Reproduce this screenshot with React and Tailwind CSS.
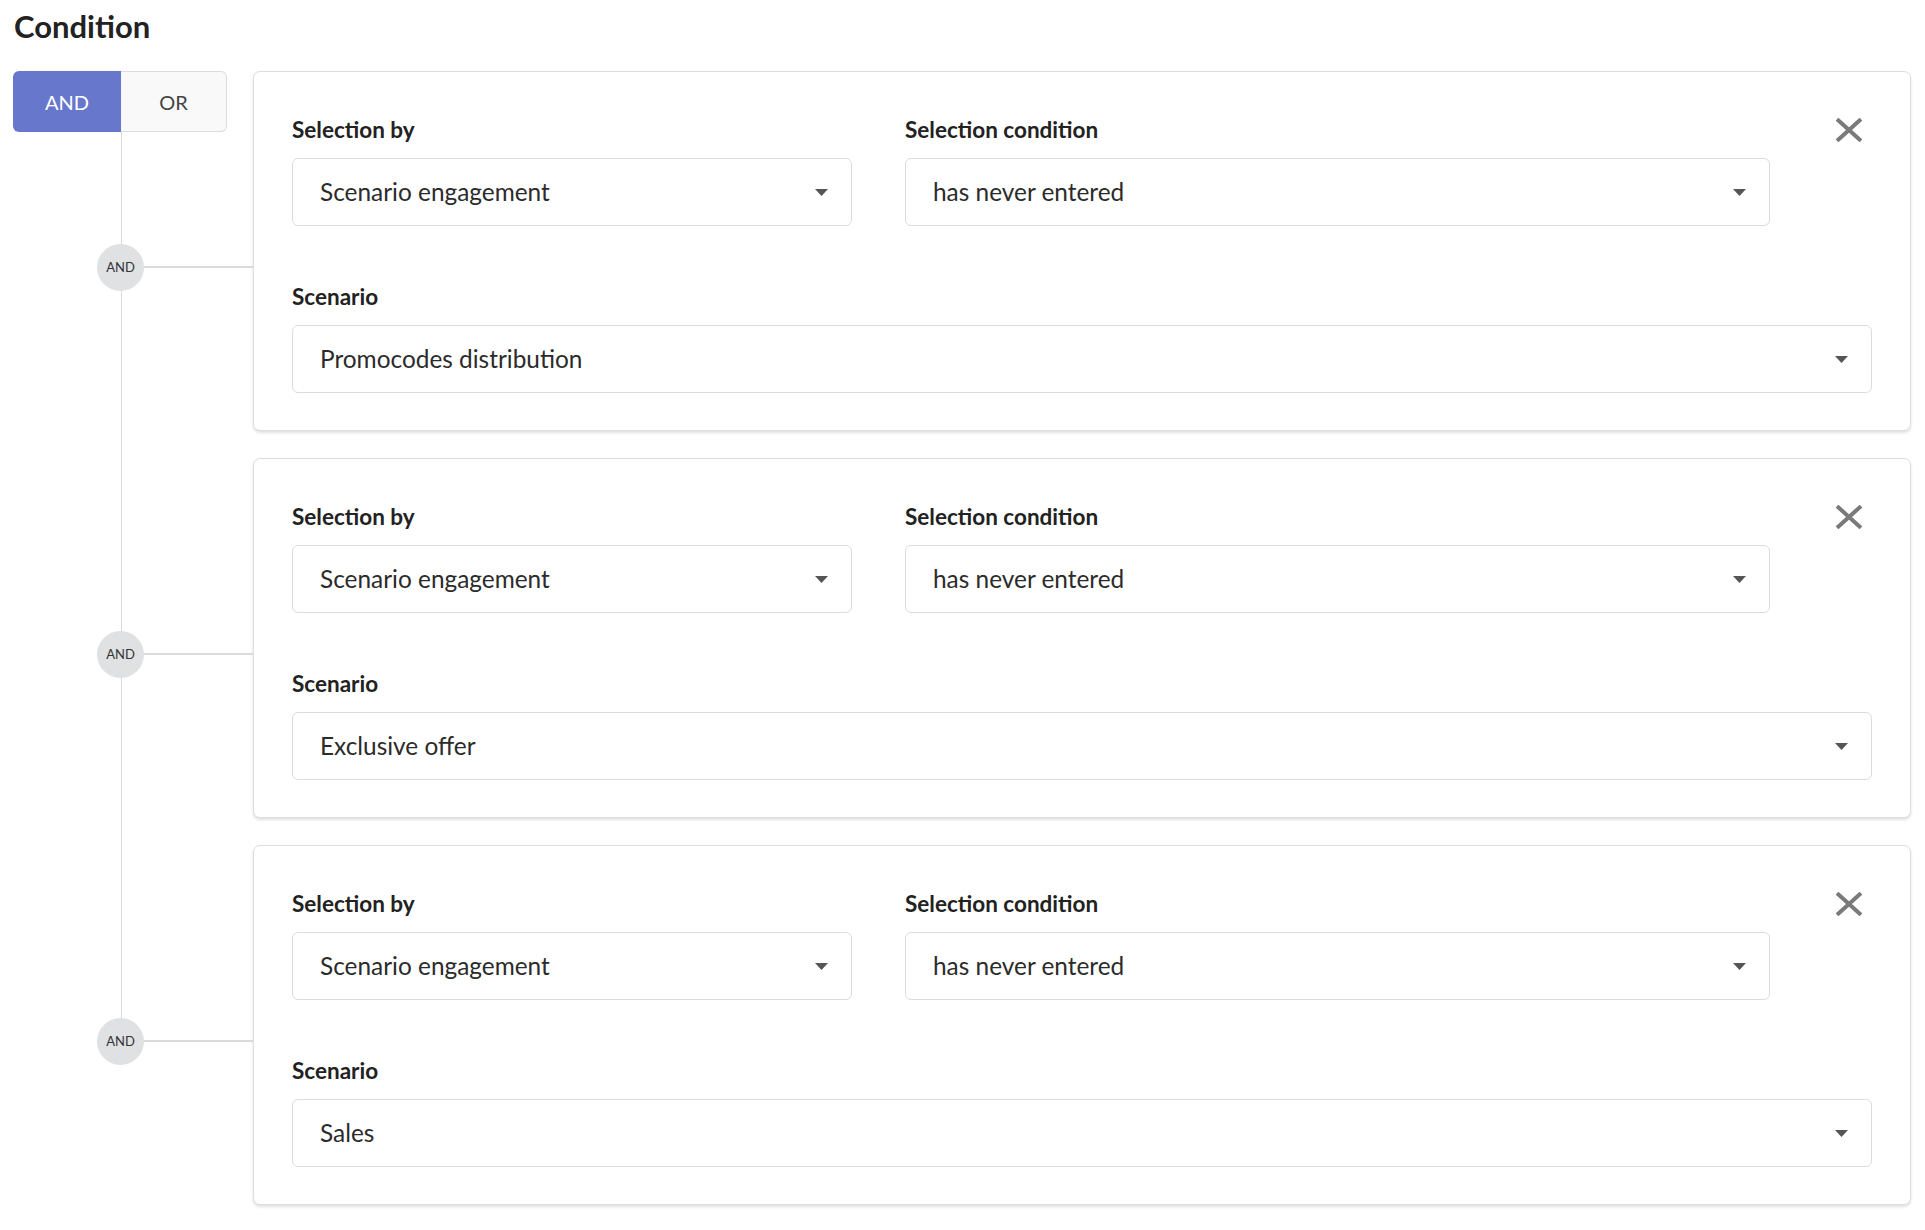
import React from 'react';

const conditions = [
    { id: 1, selectionBy: 'Scenario engagement', condition: 'has never entered', scenario: 'Promocodes distribution' },
    { id: 2, selectionBy: 'Scenario engagement', condition: 'has never entered', scenario: 'Exclusive offer' },
    { id: 3, selectionBy: 'Scenario engagement', condition: 'has never entered', scenario: 'Sales' },
];

function Caret() {
    return (
        <svg width="13" height="7" viewBox="0 0 13 7" className="shrink-0">
            <path d="M0 0 H13 L6.5 7 Z" fill="#555" />
        </svg>
    );
}

function CloseIcon() {
    return (
        <svg width="26" height="24" viewBox="0 0 26 24">
            <path d="M2.5 2.5 L23.5 21.5 M23.5 2.5 L2.5 21.5" stroke="#7a7a7a" strokeWidth="4" strokeLinecap="square" />
        </svg>
    );
}

function Select({ value }) {
    return (
        <div className="h-[68px] border border-[#dcdcdc] rounded-[6px] bg-white pl-[27px] pr-[23px] flex items-center justify-between">
            <span className="text-[24.4px] text-[#2b2b2b]">{value}</span>
            <Caret />
        </div>
    );
}

function Label({ children }) {
    return <div className="text-[22.5px] leading-[28px] font-bold text-[#222] mb-[14px]">{children}</div>;
}

function ConditionCard({ item }) {
    return (
        <div className="flex-1 border border-[#dedede] rounded-[7px] bg-white shadow-[0_2px_3px_rgba(0,0,0,0.12)] pt-[44px] px-[38px] pb-[37px]">
            <div className="flex">
                <div className="w-[560px]">
                    <Label>Selection by</Label>
                    <Select value={item.selectionBy} />
                </div>
                <div className="w-[865px] ml-[53px]">
                    <Label>Selection condition</Label>
                    <Select value={item.condition} />
                </div>
                <div className="flex-1 flex justify-end items-center h-[28px] pr-[10px]">
                    <CloseIcon />
                </div>
            </div>
            <div className="mt-[57px]">
                <Label>Scenario</Label>
                <Select value={item.scenario} />
            </div>
        </div>
    );
}

export default function App() {
    return (
        <div className="min-h-screen bg-white font-['Lato',sans-serif] text-[#222]">
            <div className="pl-[13px] pr-[14px] pt-[8px]">
                <h1 className="text-[31px] leading-[36px] font-bold pl-px">Condition</h1>
                <div className="relative mt-[27px] flex flex-col gap-[27px]">
                    <div className="absolute left-[108px] top-[61px] h-[909px] w-px bg-[#dadada]"></div>
                    {conditions.map((item, i) => (
                        <div key={item.id} className="flex">
                            <div className="relative w-[240px] shrink-0">
                                {i === 0 ? (
                                    <div className="flex h-[61px] w-[214px] text-[20px]">
                                        <div className="w-[108px] bg-[#6777cc] text-white rounded-l-[6px] flex items-center justify-center">
                                            AND
                                        </div>
                                        <div className="w-[106px] bg-[#f9f9f9] text-[#444] border border-l-0 border-[#dcdcdc] rounded-r-[6px] flex items-center justify-center">
                                            OR
                                        </div>
                                    </div>
                                ) : null}
                                <div className="absolute left-[131px] right-0 top-[195px] h-[2px] bg-[#dadada]"></div>
                                <div className="absolute left-[84px] top-[173px] w-[47px] h-[47px] rounded-full bg-[#e0e1e3] flex items-center justify-center text-[13px] text-[#333]">
                                    AND
                                </div>
                            </div>
                            <ConditionCard item={item} />
                        </div>
                    ))}
                </div>
            </div>
        </div>
    );
}
